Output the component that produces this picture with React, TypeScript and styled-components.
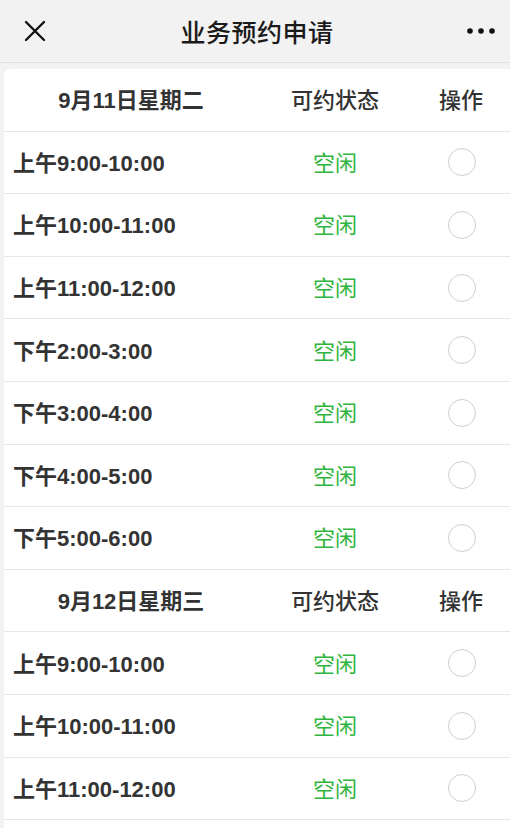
import styled, { createGlobalStyle } from "styled-components";

const GlobalStyle = createGlobalStyle`
  html, body {
    margin: 0;
    padding: 0;
    background-color: #f2f2f2;
    overflow: hidden;
  }
  body {
    font-family: "Liberation Sans", "Noto Sans CJK SC", sans-serif;
    color: #333;
  }
`;

const Page = styled.div`
  width: 510px;
  height: 828px;
  display: flex;
  flex-direction: column;
  overflow: hidden;
  background-color: #f2f2f2;
`;

const NavBar = styled.div`
  height: 62px;
  flex-shrink: 0;
  display: flex;
  align-items: center;
  justify-content: space-between;
  padding: 0 12px 0 20px;
  background-color: #f2f2f2;
  border-bottom: 1px solid #e2e2e4;
`;

const NavTitle = styled.h1`
  margin: 0;
  font-size: 25px;
  font-weight: 500;
  color: #1a1a1a;
  letter-spacing: 0.5px;
`;

const IconButton = styled.div<{ $wide?: boolean }>`
  width: ${(p) => (p.$wide ? 34 : 30)}px;
  height: 30px;
  display: flex;
  align-items: center;
  justify-content: center;
`;

const Card = styled.div`
  flex: 1;
  margin: 6px 0 0 4px;
  background-color: #fff;
  border-top-left-radius: 6px;
`;

const Row = styled.div`
  display: grid;
  grid-template-columns: 254px 154px 1fr;
  align-items: center;
  height: 62.6px;
  padding-bottom: 3px;
  box-sizing: border-box;
  border-bottom: 1px solid #e6e6e6;
`;

const HeadCell = styled.div<{ $bold?: boolean }>`
  text-align: center;
  font-size: 22px;
  font-weight: ${(p) => (p.$bold ? 700 : 500)};
  color: #333;
`;

const TimeCell = styled.div`
  padding-left: 9px;
  font-size: 22px;
  font-weight: 700;
  color: #333;
`;

const StatusCell = styled.div`
  text-align: center;
  font-size: 22px;
  color: #2fb53e;
`;

const RadioCell = styled.div`
  display: flex;
  justify-content: center;
  padding-top: 3px;
`;

const Radio = styled.span`
  width: 28px;
  height: 28px;
  border-radius: 50%;
  border: 1px solid #cfcfcf;
  box-sizing: border-box;
  transform: translateX(1px);
`;

const slots = [
  "上午9:00-10:00",
  "上午10:00-11:00",
  "上午11:00-12:00",
  "下午2:00-3:00",
  "下午3:00-4:00",
  "下午4:00-5:00",
  "下午5:00-6:00",
];

const days = [
  { label: "9月11日星期二", slots },
  { label: "9月12日星期三", slots: slots.slice(0, 3) },
];

function App() {
  return (
    <Page>
      <GlobalStyle />
      <NavBar>
        <IconButton>
          <svg width="24" height="24" viewBox="0 0 24 24">
            <path d="M3 3 L21 21 M21 3 L3 21" stroke="#111" strokeWidth="2.4" strokeLinecap="round" />
          </svg>
        </IconButton>
        <NavTitle>业务预约申请</NavTitle>
        <IconButton $wide>
          <svg width="30" height="8" viewBox="0 0 30 8">
            <circle cx="4" cy="4" r="2.8" fill="#111" />
            <circle cx="15" cy="4" r="2.8" fill="#111" />
            <circle cx="26" cy="4" r="2.8" fill="#111" />
          </svg>
        </IconButton>
      </NavBar>
      <Card>
        {days.map((day) => (
          <div key={day.label}>
            <Row>
              <HeadCell $bold>{day.label}</HeadCell>
              <HeadCell>可约状态</HeadCell>
              <HeadCell>操作</HeadCell>
            </Row>
            {day.slots.map((slot) => (
              <Row key={slot}>
                <TimeCell>{slot}</TimeCell>
                <StatusCell>空闲</StatusCell>
                <RadioCell>
                  <Radio />
                </RadioCell>
              </Row>
            ))}
          </div>
        ))}
      </Card>
    </Page>
  );
}

export default App;
